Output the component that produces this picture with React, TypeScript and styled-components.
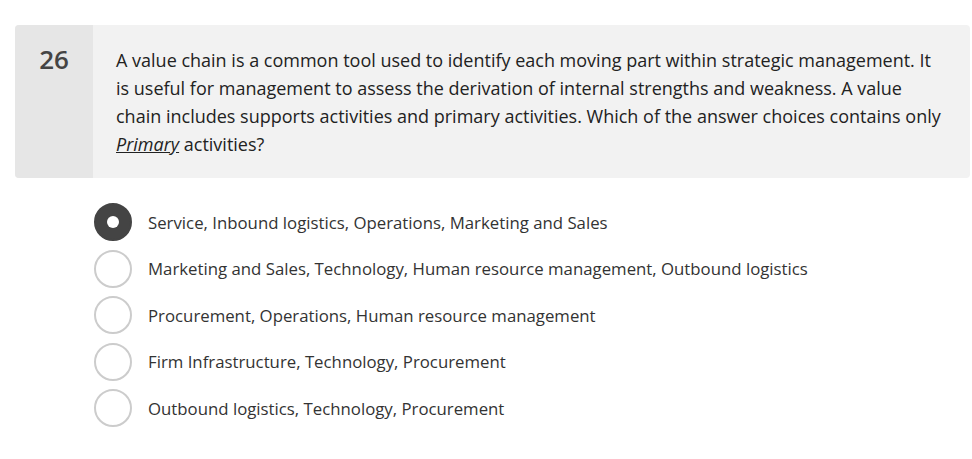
import styled, { createGlobalStyle } from "styled-components";

const GlobalStyle = createGlobalStyle`
  body {
    margin: 0;
    background: #fff;
    font-family: "Open Sans", "Liberation Sans", sans-serif;
  }
`;

const Page = styled.div`
  padding: 25px 2px 0 15px;
`;

const Question = styled.div`
  display: flex;
  background: #f2f2f2;
  border-radius: 4px;
  overflow: hidden;
  min-height: 153px;
`;

const Number = styled.div`
  width: 78px;
  flex-shrink: 0;
  background: #e6e6e6;
  color: #444;
  font-size: 26px;
  font-weight: 600;
  text-align: center;
  padding-top: 19px;
  line-height: 30px;
`;

const Prompt = styled.div`
  padding: 21px 22px 20px 23px;
  font-size: 18px;
  line-height: 28px;
  color: #222;
  em {
    text-decoration: underline;
  }
`;

const Choices = styled.ul`
  list-style: none;
  margin: 25px 0 0 79px;
  padding: 0;
  display: flex;
  flex-direction: column;
  gap: 8.5px;
`;

const Choice = styled.li`
  display: flex;
  align-items: center;
  gap: 16px;
  height: 38px;
  font-size: 16.8px;
  color: #333;
`;

const Radio = styled.span<{ $checked?: boolean }>`
  width: 38px;
  height: 38px;
  box-sizing: border-box;
  border-radius: 50%;
  border: 2px solid ${(p) => (p.$checked ? "#444" : "#ccc")};
  background: ${(p) => (p.$checked ? "#444" : "#fff")};
  display: flex;
  align-items: center;
  justify-content: center;
  &::after {
    content: "";
    width: 12px;
    height: 12px;
    border-radius: 50%;
    background: #fff;
    display: ${(p) => (p.$checked ? "block" : "none")};
  }
`;

const options = [
  "Service, Inbound logistics, Operations, Marketing and Sales",
  "Marketing and Sales, Technology, Human resource management, Outbound logistics",
  "Procurement, Operations, Human resource management",
  "Firm Infrastructure, Technology, Procurement",
  "Outbound logistics, Technology, Procurement",
];

export default function App() {
  return (
    <Page>
      <GlobalStyle />
      <Question>
        <Number>26</Number>
        <Prompt>
          A value chain is a common tool used to identify each moving part within strategic
          management. It is useful for management to assess the derivation of internal strengths
          and weakness. A value chain includes supports activities and primary activities. Which
          of the answer choices contains only <em>Primary</em> activities?
        </Prompt>
      </Question>
      <Choices>
        {options.map((o, i) => (
          <Choice key={o}>
            <Radio $checked={i === 0} />
            {o}
          </Choice>
        ))}
      </Choices>
    </Page>
  );
}
